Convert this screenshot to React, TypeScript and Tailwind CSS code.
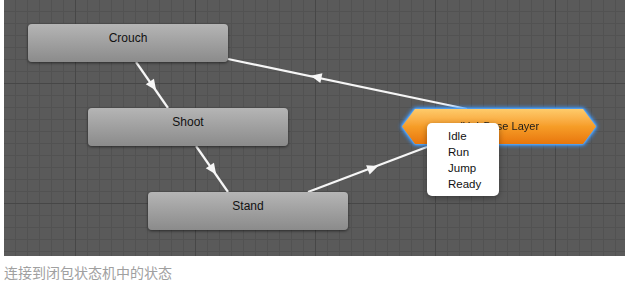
type Pt = [number, number];

const edges: { from: Pt; to: Pt; at: Pt }[] = [
  { from: [132, 62], to: [164, 108], at: [149, 86] },
  { from: [192, 146], to: [224, 192], at: [209, 170] },
  { from: [304, 192], to: [436, 142], at: [369, 168] },
  { from: [463, 109], to: [224, 59], at: [312, 77] },
];

function arrowHead(from: Pt, to: Pt, at: Pt) {
  const dx = to[0] - from[0];
  const dy = to[1] - from[1];
  const len = Math.hypot(dx, dy);
  const ux = dx / len;
  const uy = dy / len;
  const L = 11;
  const W = 5;
  const tip: Pt = [at[0] + (ux * L) / 2, at[1] + (uy * L) / 2];
  const base: Pt = [at[0] - (ux * L) / 2, at[1] - (uy * L) / 2];
  const a: Pt = [base[0] - uy * W, base[1] + ux * W];
  const b: Pt = [base[0] + uy * W, base[1] - ux * W];
  return [tip, a, b].map((p) => p.join(',')).join(' ');
}

function StateNode({ label, className }: { label: string; className: string }) {
  return (
    <div
      className={`absolute w-[200px] h-[38px] rounded-[4px] bg-linear-to-b from-[#b5b5b5] to-[#8b8b8b] shadow-[0_1px_3px_rgba(0,0,0,0.55)] pt-[7px] text-center text-[12px] leading-[14px] text-[#111] font-['Liberation_Sans',sans-serif] ${className}`}
    >
      {label}
    </div>
  );
}

function GraphCanvas() {
  return (
    <div className="relative w-[621px] h-[256px] bg-[#5a5a5a] overflow-hidden">
      <svg className="absolute inset-0" width={621} height={256}>
        <defs>
          <pattern id="minor" width={12} height={12} x={-1} y={-1} patternUnits="userSpaceOnUse">
            <rect width={12} height={12} fill="#5a5a5a" />
            <rect width={1} height={12} fill="#525252" />
            <rect width={12} height={1} fill="#525252" />
          </pattern>
          <pattern id="major" width={120} height={120} x={-49} y={-37} patternUnits="userSpaceOnUse">
            <rect width={1} height={120} fill="#474747" />
            <rect width={120} height={1} fill="#474747" />
          </pattern>
        </defs>
        <rect width={621} height={256} fill="url(#minor)" />
        <rect width={621} height={256} fill="url(#major)" />
        {edges.map((e, i) => (
          <g key={i}>
            <line
              x1={e.from[0]}
              y1={e.from[1]}
              x2={e.to[0]}
              y2={e.to[1]}
              stroke="#f6f6f6"
              strokeWidth={2.2}
            />
            <polygon points={arrowHead(e.from, e.to, e.at)} fill="#f6f6f6" />
          </g>
        ))}
      </svg>

      <StateNode label="Crouch" className="left-[24px] top-[24px]" />
      <StateNode label="Shoot" className="left-[84px] top-[108px]" />
      <StateNode label="Stand" className="left-[144px] top-[192px]" />

      <div className="absolute left-[398px] top-[109px] [filter:drop-shadow(0_0_1px_#7cc2ff)_drop-shadow(0_0_2px_#3a97ff)_drop-shadow(0_0_1px_#3a97ff)]">
        <div className="w-[194px] h-[35px] flex items-center justify-center bg-linear-to-b from-[#fecb6a] via-[#f69d27] to-[#e8760a] [clip-path:polygon(13px_0,181px_0,194px_50%,181px_100%,13px_100%,0_50%)] text-[11px] text-[#1c1c1c] font-['Liberation_Sans',sans-serif]">
          (Up) Base Layer
        </div>
      </div>

      <div className="absolute left-[423px] top-[123px] w-[72px] rounded-[5px] bg-white pt-[5px] pb-[4px] pl-[21px] shadow-[0_2px_6px_rgba(0,0,0,0.35)] text-[11.5px] leading-[16px] text-[#111] font-['Liberation_Sans',sans-serif]">
        <div>Idle</div>
        <div>Run</div>
        <div>Jump</div>
        <div>Ready</div>
      </div>
    </div>
  );
}

export default function App() {
  return (
    <div className="w-[626px] h-[282px] bg-white pl-[4px]">
      <GraphCanvas />
      <p className="mt-[7px] text-[14px] leading-[18px] text-[#a0a0a0] font-['Noto_Sans_CJK_SC',sans-serif]">
        连接到闭包状态机中的状态
      </p>
    </div>
  );
}
